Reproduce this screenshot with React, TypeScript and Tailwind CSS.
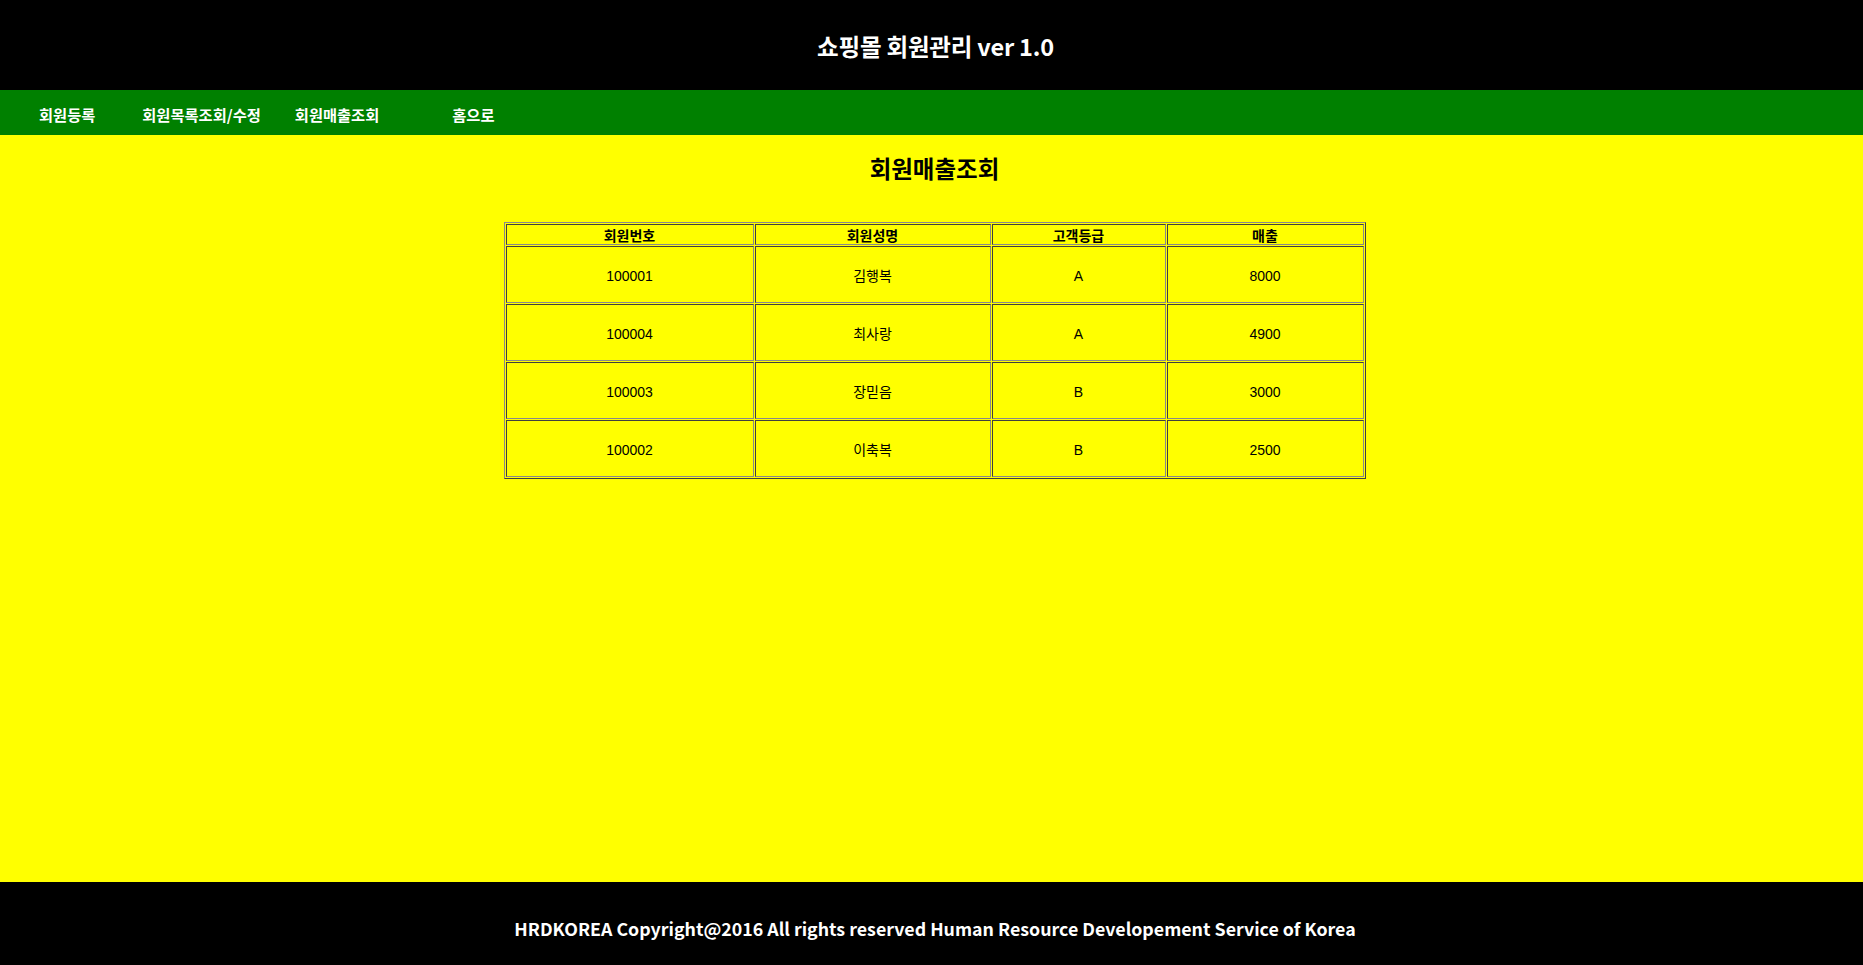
import React from 'react';

const rows = [
  { id: '100001', name: '김행복', grade: 'A', sales: '8000' },
  { id: '100004', name: '최사랑', grade: 'A', sales: '4900' },
  { id: '100003', name: '장믿음', grade: 'B', sales: '3000' },
  { id: '100002', name: '이축복', grade: 'B', sales: '2500' },
];

const gothic = "font-['Noto_Sans_CJK_KR',sans-serif]";
const cell =
  'border border-t-[#404040] border-l-[#404040] border-r-[#8a8a8a] border-b-[#8a8a8a] p-0 text-center';

export default function App() {
  return (
    <div className={`min-h-screen flex flex-col bg-[#ffff00] ${gothic}`}>
      {/* Header */}
      <header className="h-[90px] bg-black flex items-center justify-center pt-[3px] pl-[8px]">
        <h1 className="text-white text-[23.5px] font-bold tracking-[-0.2px]">쇼핑몰 회원관리 ver 1.0</h1>
      </header>

      {/* Nav */}
      <nav className="h-[45px] bg-[#008000] flex items-center pl-[39px] pt-[4px] text-white text-[15.3px] font-bold">
        <a className="mr-[47px]">회원등록</a>
        <a className="mr-[34px]">회원목록조회/수정</a>
        <a className="mr-[73px]">회원매출조회</a>
        <a>홈으로</a>
      </nav>

      {/* Content */}
      <main className="flex-1 flex flex-col items-center pl-[6px]">
        <h2 className="mt-[17px] text-[23.5px] font-bold text-black leading-[32px]">회원매출조회</h2>

        <table className="mt-[38px] w-[862px] border-separate border-spacing-[1px] border border-t-[#8a8a8a] border-l-[#8a8a8a] border-r-[#404040] border-b-[#404040]">
          <thead>
            <tr className="h-[21px]">
              <th className={`${cell} w-[248px] text-[14px] font-bold leading-[18px] pt-[1px]`}>회원번호</th>
              <th className={`${cell} w-[236px] text-[14px] font-bold leading-[18px] pt-[1px]`}>회원성명</th>
              <th className={`${cell} w-[174px] text-[14px] font-bold leading-[18px] pt-[1px]`}>고객등급</th>
              <th className={`${cell} text-[14px] font-bold leading-[18px] pt-[1px]`}>매출</th>
            </tr>
          </thead>
          <tbody className="font-['Liberation_Sans','Noto_Sans_CJK_KR',sans-serif] text-[14px] text-black">
            {rows.map((r) => (
              <tr key={r.id} className="h-[57px]">
                <td className={`${cell} pt-[3px]`}>{r.id}</td>
                <td className={`${cell} pt-[3px]`}>{r.name}</td>
                <td className={`${cell} pt-[3px]`}>{r.grade}</td>
                <td className={`${cell} pt-[3px]`}>{r.sales}</td>
              </tr>
            ))}
          </tbody>
        </table>
      </main>

      {/* Footer */}
      <footer className="h-[83px] bg-black flex items-center justify-center pt-[9px] pl-[7px]">
        <p className="text-white text-[17.8px] font-bold">
          HRDKOREA Copyright@2016 All rights reserved Human Resource Developement Service of Korea
        </p>
      </footer>
    </div>
  );
}
